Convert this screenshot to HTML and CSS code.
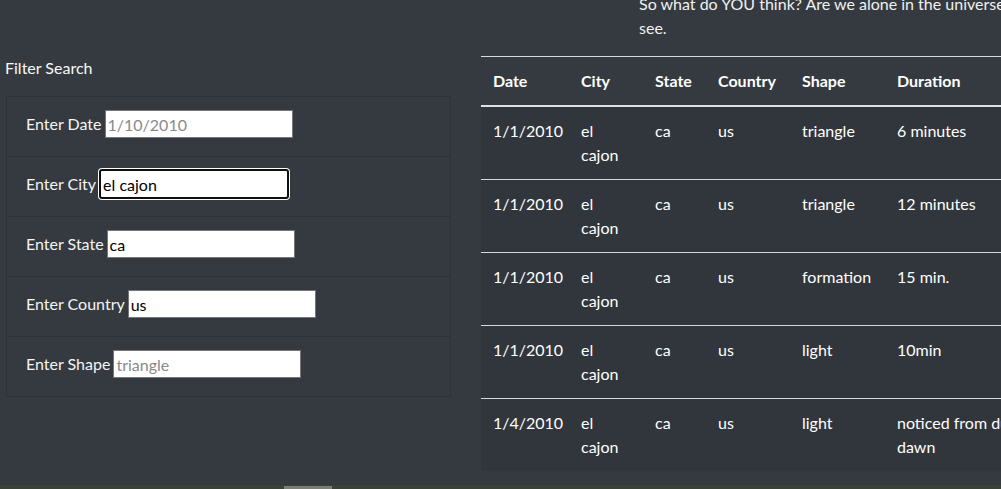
FILE: index.html
```html
<!DOCTYPE html>
<html>
<head>
<meta charset="utf-8">
<link rel="stylesheet" href="styles.css">
</head>
<body>
<div class="page">
  <p class="intro">So what do YOU think? Are we alone in the universe? Look at the sightings below and decide what you<br>see.</p>
  <div class="main">
    <aside class="filters">
      <h2 class="filters-title">Filter Search</h2>
      <ul class="filter-list">
        <li class="filter-row"><label class="filter-label" for="f-date">Enter Date</label> <input class="filter-input" id="f-date" type="text" placeholder="1/10/2010"></li>
        <li class="filter-row"><label class="filter-label" for="f-city">Enter City</label> <input class="filter-input is-focused" id="f-city" type="text" value="el cajon"></li>
        <li class="filter-row"><label class="filter-label" for="f-state">Enter State</label> <input class="filter-input" id="f-state" type="text" value="ca"></li>
        <li class="filter-row"><label class="filter-label" for="f-country">Enter Country</label> <input class="filter-input" id="f-country" type="text" value="us"></li>
        <li class="filter-row"><label class="filter-label" for="f-shape">Enter Shape</label> <input class="filter-input" id="f-shape" type="text" placeholder="triangle"></li>
      </ul>
    </aside>
    <section class="results">
      <table class="ufo-table">
        <colgroup>
          <col class="c-date"><col class="c-city"><col class="c-state"><col class="c-country"><col class="c-shape"><col class="c-duration"><col class="c-comments">
        </colgroup>
        <thead>
          <tr><th>Date</th><th>City</th><th>State</th><th>Country</th><th>Shape</th><th>Duration</th><th>Comments</th></tr>
        </thead>
        <tbody>
          <tr><td>1/1/2010</td><td>el cajon</td><td>ca</td><td>us</td><td>triangle</td><td>6 minutes</td><td>Three lights in a triangle</td></tr>
          <tr><td>1/1/2010</td><td>el cajon</td><td>ca</td><td>us</td><td>triangle</td><td>12 minutes</td><td>Triangle of lights over the hills</td></tr>
          <tr><td>1/1/2010</td><td>el cajon</td><td>ca</td><td>us</td><td>formation</td><td>15 min.</td><td>Formation of red lights</td></tr>
          <tr><td>1/1/2010</td><td>el cajon</td><td>ca</td><td>us</td><td>light</td><td>10min</td><td>Bright light hovering</td></tr>
          <tr><td>1/4/2010</td><td>el cajon</td><td>ca</td><td>us</td><td>light</td><td>noticed from dusk till dawn</td><td>Stationary light in the sky</td></tr>
        </tbody>
      </table>
    </section>
  </div>
</div>
<div class="scrollbar"><div class="scrollbar-thumb"></div></div>
</body>
</html>
```

FILE: styles.css
```css
html, body {
  margin: 0;
  padding: 0;
  height: 100%;
  overflow: hidden;
}
body {
  background: #343a40;
  color: #f8f9fa;
  font-family: Lato, "Open Sans", sans-serif;
  font-size: 16px;
  line-height: 24px;
  position: relative;
}
.page {
  margin-top: -8px;
  width: 1400px;
}
.intro {
  margin: 0 0 16px 639px;
  white-space: nowrap;
  color: #f1f1f1;
}
.main {
  display: flex;
  align-items: flex-start;
}
.filters {
  width: 481px;
  padding-left: 6px;
  box-sizing: border-box;
  flex: none;
}
.filters-title {
  margin: 0 0 16px -1px;
  font-size: 16px;
  font-weight: 400;
  line-height: 24px;
}
.filter-list {
  list-style: none;
  margin: 0;
  padding: 0;
  width: 445px;
  border: 1px solid #2d3237;
  box-sizing: border-box;
}
.filter-row {
  height: 60px;
  box-sizing: border-box;
  padding: 13px 19px 0;
  border-bottom: 1px solid #2d3237;
  display: flex;
  align-items: flex-start;
  gap: 3px;
}
.filter-row:last-child {
  height: 59px;
  border-bottom: 0;
}
.filter-label {
  line-height: 28px;
  color: #f4f4f4;
}
.filter-input {
  width: 188px;
  height: 28px;
  box-sizing: border-box;
  margin: 0;
  padding: 1px 2px;
  border: 1px solid #767676;
  background: #fff;
  color: #000;
  font-family: inherit;
  font-size: 16px;
  outline: none;
}
.filter-input::placeholder {
  color: #8a8a8a;
}
.filter-input.is-focused {
  width: 190px;
  height: 30px;
  margin-top: -1px;
  border: 2px solid #101010;
  border-radius: 3px;
  box-shadow: 0 0 0 1px #ffffff;
}
.results {
  flex: none;
}
.ufo-table {
  border-collapse: collapse;
  table-layout: fixed;
  width: 760px;
  background: #31363c;
  color: #fff;
  border-top: 1px solid #d8dbde;
}
.c-date { width: 88px; }
.c-city { width: 74px; }
.c-state { width: 63px; }
.c-country { width: 84px; }
.c-shape { width: 95px; }
.c-duration { width: 180px; }
.c-comments { width: 176px; }
.ufo-table th,
.ufo-table td {
  padding: 12px;
  text-align: left;
  vertical-align: top;
  line-height: 24px;
}
.ufo-table th {
  font-weight: 700;
  background: #343a40;
  border-bottom: 2px solid #dee2e6;
}
.ufo-table td {
  border-top: 1px solid #d5d8dc;
}
.ufo-table tbody tr:first-child td {
  border-top: 0;
}
.scrollbar {
  position: absolute;
  left: 0;
  right: 0;
  bottom: 0;
  height: 4px;
  background: #3c4138;
}
.scrollbar-thumb {
  margin-left: 284px;
  width: 48px;
  height: 3px;
  margin-top: 1px;
  background: #7b7e74;
}
```
